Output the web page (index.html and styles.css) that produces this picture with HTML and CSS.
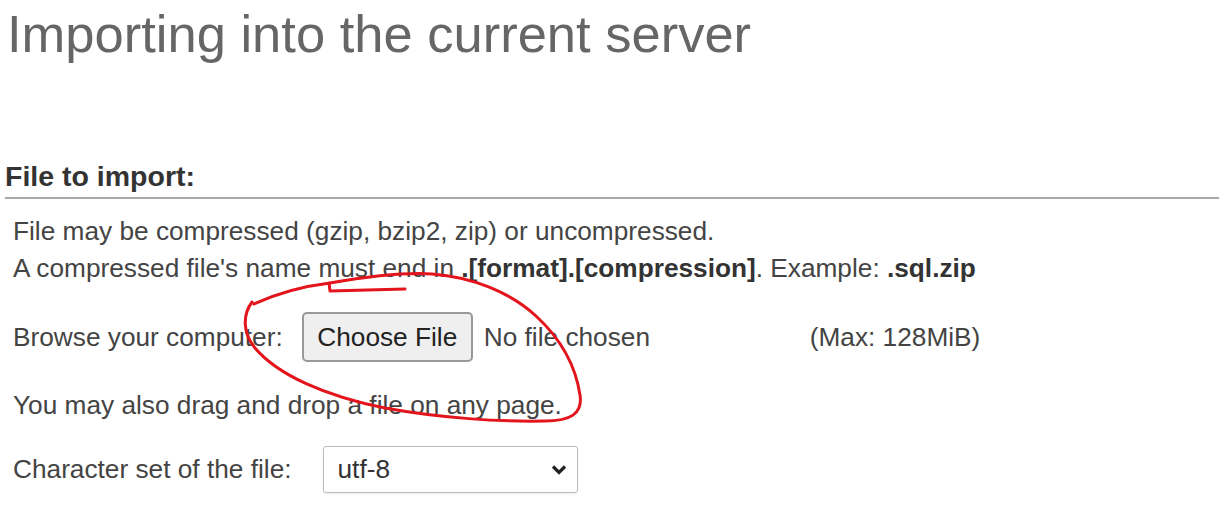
FILE: index.html
```html
<!DOCTYPE html>
<html lang="en">
<head>
<meta charset="utf-8">
<title>Import</title>
<link rel="stylesheet" href="styles.css">
</head>
<body>
<div class="page">
  <h2 class="title">Importing into the current server</h2>
  <section class="import">
    <h3 class="legend">File to import:</h3>
    <div class="content">
      <p class="desc">File may be compressed (gzip, bzip2, zip) or uncompressed.<br>A compressed file's name must end in <b>.[format].[compression]</b>. Example: <b>.sql.zip</b></p>
      <div class="row browse">
        <span class="label">Browse your computer:</span>
        <button class="file-btn" type="button">Choose File</button>
        <span class="file-name">No file chosen</span>
        <span class="max">(Max: 128MiB)</span>
      </div>
      <p class="drag">You may also drag and drop a file on any page.</p>
      <div class="row charset">
        <span class="label">Character set of the file:</span>
        <div class="select">
          <span class="select-value">utf-8</span>
          <svg class="chevron" width="16" height="11" viewBox="0 0 16 11"><path d="M2 2.5 L8 8.5 L14 2.5" fill="none" stroke="#222" stroke-width="3.2"/></svg>
        </div>
      </div>
    </div>
  </section>
</div>
<svg class="annotation" width="1219" height="520" viewBox="0 0 1219 520">
  <path d="M254 304 C280 292, 305 286, 330 283 C365 277, 400 272, 432 274 C472 277, 510 292, 536 316 C562 340, 576 368, 580 395 C583 414, 570 421, 545 421 C500 422, 440 418, 385 408 C325 396, 278 375, 255 348 C242 332, 243 314, 252 302" fill="none" stroke="#e3141c" stroke-width="3" stroke-linecap="round" stroke-linejoin="round"/>
  <path d="M329 283 L330 291 L405 289" fill="none" stroke="#e3141c" stroke-width="3" stroke-linecap="round" stroke-linejoin="round"/>
</svg>
</body>
</html>
```
FILE: styles.css
```css
html, body {
  margin: 0;
  padding: 0;
  background: #fff;
}
body {
  position: relative;
  width: 1219px;
  height: 520px;
  overflow: hidden;
  font-family: "Liberation Sans", Arial, sans-serif;
  font-size: 26.24px;
  color: #444;
}
.page {
  padding-left: 5px;
}
.title {
  margin: 4px 0 0 2px;
  font-size: 52.5px;
  font-weight: normal;
  line-height: 60px;
  color: #666;
  white-space: nowrap;
}
.import {
  margin-top: 96px;
}
.legend {
  margin: 0;
  font-size: 28.5px;
  font-weight: bold;
  line-height: 32px;
  padding-bottom: 5px;
  border-bottom: 2px solid #aaa;
  color: #333;
}
.content {
  padding: 14px 0 0 8px;
}
.desc {
  margin: 0;
  line-height: 37px;
}
.desc b {
  color: #333;
}
.row {
  display: flex;
  align-items: center;
  white-space: nowrap;
}
.browse {
  margin-top: 25px;
  height: 50px;
}
.file-btn {
  margin-left: 19px;
  width: 171px;
  height: 50px;
  box-sizing: border-box;
  padding: 0;
  border: 2px solid #999;
  border-radius: 5px;
  background: #efefef;
  font-family: "Liberation Sans", Arial, sans-serif;
  font-size: 26.24px;
  color: #222;
}
.file-name {
  margin-left: 11px;
  width: 326px;
}
.drag {
  margin: 25px 0 0;
  line-height: 37px;
}
.charset {
  margin-top: 22px;
  height: 47px;
}
.select {
  margin-left: 31px;
  width: 255px;
  height: 47px;
  box-sizing: border-box;
  border: 1px solid #bbb;
  border-radius: 3px;
  padding: 0 10px 0 14px;
  display: flex;
  align-items: center;
  justify-content: space-between;
  color: #333;
  box-shadow: 0 1px 2px rgba(0,0,0,0.08);
}
.chevron {
  display: block;
}
.annotation {
  position: absolute;
  top: 0;
  left: 0;
  pointer-events: none;
}
```
